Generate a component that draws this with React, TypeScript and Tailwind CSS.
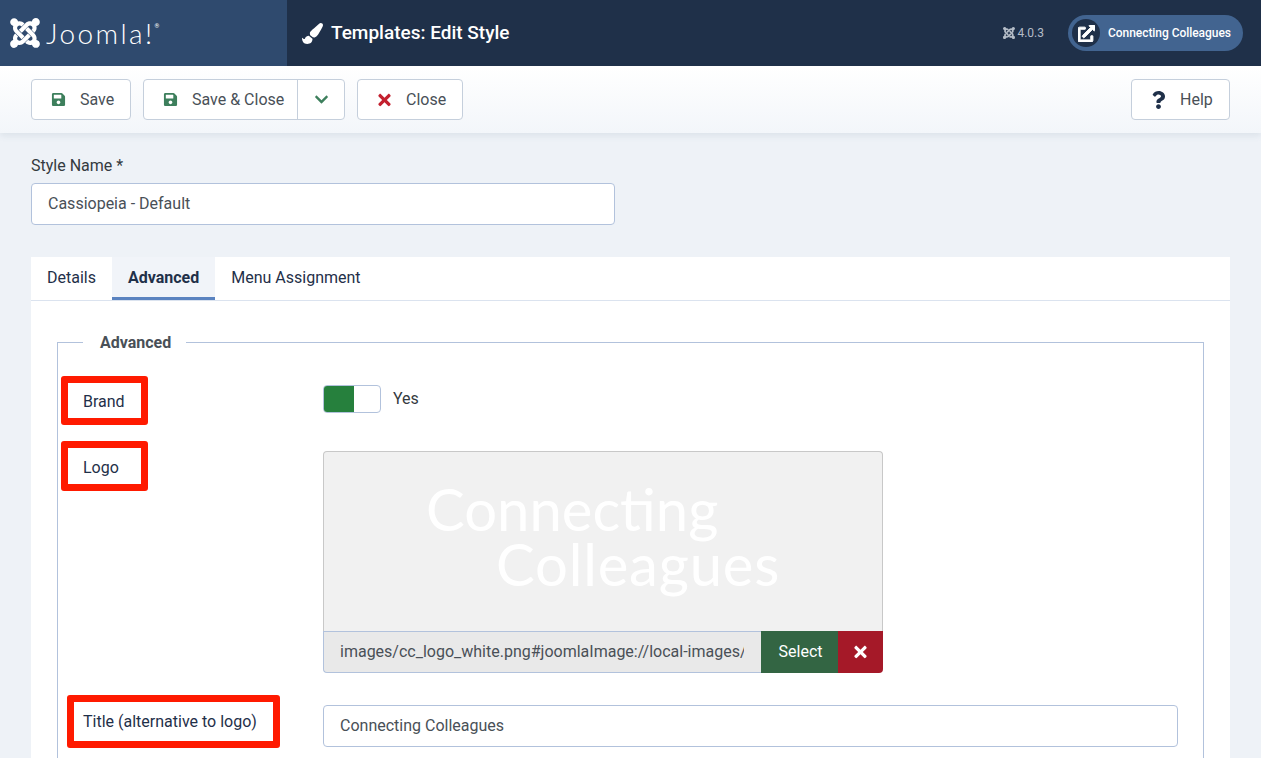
import { FaChevronDown, FaExternalLinkAlt, FaJoomla, FaPaintBrush, FaQuestion, FaSave, FaTimes } from "react-icons/fa";

const buttonClass =
  "flex items-center h-[41px] bg-white border border-[#c5cfdc] rounded-[4px] text-[#495057] text-base";

const Callout = ({ className }: { className: string }) => (
  <div className={`absolute border-[7px] border-[#ff1a00] rounded-[3px] ${className}`}></div>
);

const App = () => {
  return (
    <div className="relative h-[758px] overflow-hidden bg-[#eef2f7] font-['Roboto',sans-serif] text-base text-[#22262a]">
      <header className="flex h-[66px] bg-[#1f3049] text-white">
        <div className="flex items-center w-[287px] bg-[#2f4a6e] pl-[10px]">
          <FaJoomla className="w-[30px] h-[34px]" />
          <span className="ml-[6px] font-['Lato',sans-serif] font-light text-[28px] leading-none tracking-[2.4px]">Joomla!</span>
          <span className="self-start mt-[23px] text-[6px] leading-none">®</span>
        </div>
        <div className="flex items-center flex-1 pl-[15px] pr-[18px]">
          <FaPaintBrush className="w-[21px] h-[21px]" />
          <h1 className="ml-2 text-[19px] font-medium">Templates: Edit Style</h1>
          <div className="flex items-center ml-auto gap-[2px] text-xs text-[#b4bcc7]">
            <FaJoomla className="w-[12px] h-[14px]" />
            <span>4.0.3</span>
          </div>
          <div className="flex items-center ml-[24px] w-[175px] h-9 rounded-full bg-[#426490] pl-1">
            <span className="flex items-center justify-center w-7 h-7 rounded-full bg-[#1f3049]">
              <FaExternalLinkAlt className="w-[17px] h-[17px] [stroke-width:30]" />
            </span>
            <span className="ml-[8px] text-xs font-medium whitespace-nowrap tracking-[-0.05px]">Connecting Colleagues</span>
          </div>
        </div>
      </header>

      <div className="relative flex items-center gap-3 h-[67px] px-[31px] bg-gradient-to-b from-white to-[#f3f6fa] shadow-[0_3px_6px_rgba(100,120,150,0.12)]">
        <button className={`${buttonClass} w-[100px] pl-[19px]`}>
          <FaSave className="w-[15px] h-[15px] text-[#3d7f5c]" />
          <span className="ml-[14px]">Save</span>
        </button>
        <div className={buttonClass}>
          <button className="flex items-center w-[153px] h-full pl-[19px]">
            <FaSave className="w-[15px] h-[15px] text-[#3d7f5c]" />
            <span className="ml-[14px]">Save &amp; Close</span>
          </button>
          <button className="flex items-center justify-center w-[47px] h-full border-l border-[#c5cfdc]">
            <FaChevronDown className="w-[15px] h-[15px] text-[#3d7f5c]" />
          </button>
        </div>
        <button className={`${buttonClass} w-[106px] pl-[19px]`}>
          <FaTimes className="w-[15px] h-[18px] text-[#c3202f]" />
          <span className="ml-[14px]">Close</span>
        </button>
        <button className={`${buttonClass} ml-auto w-[99px] pl-[19px]`}>
          <FaQuestion className="w-[15px] h-[18px] text-[#1f3049]" />
          <span className="ml-[14px]">Help</span>
        </button>
      </div>

      <main className="px-[31px] pt-[23px]">
        <label className="block leading-[20px] text-[#343a40]">Style Name *</label>
        <div className="flex items-center mt-[7px] w-[584px] h-[42px] px-4 bg-white border border-[#b2c2dc] rounded-[4px] text-[#495057]">
          Cassiopeia - Default
        </div>

        <section className="mt-8 bg-white">
          <nav className="flex h-[44px] border-b border-[#dbe3ef] text-[#1f3049]">
            <div className="flex items-center px-4 pt-[2px] h-[43px] border-b-[3px] border-transparent">Details</div>
            <div className="flex items-center px-4 pt-[2px] h-[43px] font-bold bg-[#f1f4f9] border-b-[3px] border-[#5a83c0]">Advanced</div>
            <div className="flex items-center px-4 pt-[2px] h-[43px] border-b-[3px] border-transparent">Menu Assignment</div>
          </nav>

          <div className="px-[26px] pt-[30px]">
            <fieldset className="border border-[#b2c2dc] pl-[25px] pr-[25px] h-[500px]">
              <legend className="pl-[17px] pr-[15px] pt-[2px] font-bold text-[#495057] leading-[20px]">Advanced</legend>

              <div className="flex h-[72px]">
                <div className="w-[240px] pt-[37px] leading-[24px] text-[#1f3049]">Brand</div>
                <div className="flex items-start pt-[32px]">
                  <div className="flex w-[58px] h-[28px] border border-[#b2c2dc] rounded-[4px] overflow-hidden">
                    <div className="w-[30px] bg-[#26803d]"></div>
                  </div>
                  <span className="ml-3 leading-[24px] text-[#343a40] mt-[2px]">Yes</span>
                </div>
              </div>

              <div className="flex mt-[15px]">
                <div className="w-[240px] pt-[16px] leading-[24px] text-[#1f3049]">Logo</div>
                <div className="w-[560px] pt-[11px]">
                  <div className="flex flex-col h-[180px] pt-[29px] bg-[#f1f1f1] border border-b-0 border-[#c8c8c8] rounded-t-[4px] font-['Lato',sans-serif] text-[58px] leading-[55px] text-white">
                    <span className="ml-[102px]">Connecting</span>
                    <span className="ml-[172px] tracking-[0.8px]">Colleagues</span>
                  </div>
                  <div className="flex h-[42px]">
                    <div className="flex-1 flex items-center pl-4 pr-[17px] min-w-0 bg-[#e9e9e9] border border-r-0 border-[#b2c2dc] rounded-bl-[4px] text-[#495057]">
                      <span className="min-w-0 overflow-hidden whitespace-nowrap">images/cc_logo_white.png#joomlaImage://local-images/</span>
                    </div>
                    <button className="w-[77px] pl-[2px] bg-[#336543] text-white">Select</button>
                    <button className="flex items-center justify-center w-[45px] bg-[#a51928] rounded-br-[4px] text-white">
                      <FaTimes className="w-[15px] h-[18px]" />
                    </button>
                  </div>
                </div>
              </div>

              <div className="flex mt-[32px]">
                <div className="w-[240px] pt-[5px] leading-[24px] text-[#1f3049] whitespace-nowrap">Title (alternative to logo)</div>
                <div className="flex items-center flex-1 h-[42px] px-4 bg-white border border-[#b2c2dc] rounded-[4px] text-[#495057]">
                  Connecting Colleagues
                </div>
              </div>
            </fieldset>
          </div>
        </section>
      </main>

      <Callout className="left-[61px] top-[376px] w-[87px] h-[49px]" />
      <Callout className="left-[61px] top-[441px] w-[87px] h-[50px]" />
      <Callout className="left-[67px] top-[695px] w-[213px] h-[53px]" />
    </div>
  );
};

export default App;
